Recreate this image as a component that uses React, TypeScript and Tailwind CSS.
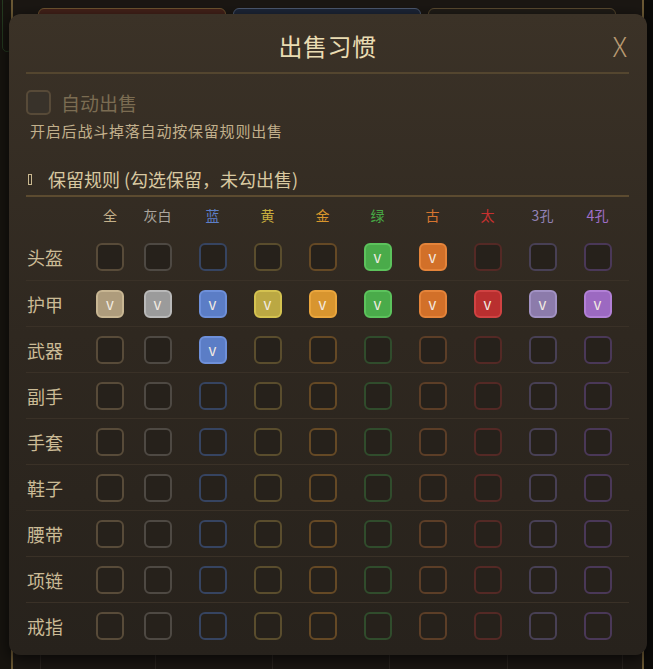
import React from "react";

type Col = { name: string; text: string; off: string; on: string };

const cols: Col[] = [
  { name: "全", text: "text-[#c4b08a]", off: "border-[#584b39]", on: "bg-[#ae9c7c] border-[#c8b692]" },
  { name: "灰白", text: "text-[#aba69e]", off: "border-[#4e4943]", on: "bg-[#9b9b9b] border-[#b9b9b9]" },
  { name: "蓝", text: "text-[#5d7fc9]", off: "border-[#364461]", on: "bg-[#5b7dc6] border-[#6e90da]" },
  { name: "黄", text: "text-[#c8ae3e]", off: "border-[#5a4d2d]", on: "bg-[#bba843] border-[#d4c250]" },
  { name: "金", text: "text-[#d9962c]", off: "border-[#654925]", on: "bg-[#d8952f] border-[#eaa63d]" },
  { name: "绿", text: "text-[#47a845]", off: "border-[#304c2c]", on: "bg-[#4aab4a] border-[#5cc35c]" },
  { name: "古", text: "text-[#d67530]", off: "border-[#5c3e27]", on: "bg-[#d27029] border-[#e5843a]" },
  { name: "太", text: "text-[#c7302f]", off: "border-[#542925]", on: "bg-[#b92f2f] border-[#d04242]" },
  { name: "3孔", text: "text-[#9282b6]", off: "border-[#484055]", on: "bg-[#8c7bab] border-[#a292c4]" },
  { name: "4孔", text: "text-[#a06fcb]", off: "border-[#4a3858]", on: "bg-[#9c69c1] border-[#b280d6]" },
];

const rows: { name: string; checked: number[] }[] = [
  { name: "头盔", checked: [5, 6] },
  { name: "护甲", checked: [0, 1, 2, 3, 4, 5, 6, 7, 8, 9] },
  { name: "武器", checked: [2] },
  { name: "副手", checked: [] },
  { name: "手套", checked: [] },
  { name: "鞋子", checked: [] },
  { name: "腰带", checked: [] },
  { name: "项链", checked: [] },
  { name: "戒指", checked: [] },
];

const gridCols = "grid grid-cols-[64px_40px_repeat(9,55px)]";

function Box({ col, on }: { col: Col; on: boolean }) {
  if (on) {
    return (
      <div
        className={`w-[28px] h-[28px] rounded-[6px] border-2 flex items-center justify-center text-[15px] leading-none text-[#f3ece2] pb-[1px] ${col.on}`}
      >
        v
      </div>
    );
  }
  return <div className={`w-[28px] h-[28px] rounded-[6px] border-2 bg-[#26211b] ${col.off}`} />;
}

export default function App() {
  return (
    <div className="relative w-[653px] h-[669px] overflow-hidden bg-[#0c0b09] font-['Noto_Sans_CJK_SC','Noto_Sans',sans-serif]">
      {/* background page */}
      <div className="absolute left-0 top-0 w-[12px] h-full bg-[#17140f]" />
      <div className="absolute left-[2px] top-[-20px] w-[10px] h-[72px] rounded-[8px] border border-[#243a20]" />
      <div className="absolute left-[11px] top-0 w-[633px] h-full border-x-2 border-[#6a5834] bg-[#1b1713]">
        <div className="flex gap-[7px] pl-[25px] pt-[8px]">
          <div className="w-[188px] h-[40px] rounded-[6px] border border-[#6f5530] bg-[#45221a]" />
          <div className="w-[188px] h-[40px] rounded-[6px] border border-[#4e5a70] bg-[#1d2638]" />
          <div className="w-[188px] h-[40px] rounded-[6px] border border-[#5a4a30] bg-[#201c17]" />
        </div>
        <div className="absolute left-0 bottom-0 w-full h-[14px] flex">
          <div className="w-[28px] border-r border-[#2a2520]" />
          <div className="w-[115px] border-r border-[#2a2520]" />
          <div className="w-[117px] border-r border-[#2a2520]" />
          <div className="w-[117px] border-r border-[#2a2520]" />
          <div className="w-[118px] border-r border-[#2a2520]" />
          <div className="w-[115px] border-r border-[#2a2520]" />
        </div>
      </div>

      {/* modal */}
      <div className="absolute left-[9px] top-[14px] w-[638px] h-[641px] rounded-[12px] bg-gradient-to-b from-[#3b3227] via-[#2f2820] to-[#27221c] shadow-[0_4px_16px_rgba(0,0,0,0.7)] pl-[17px] pr-[18px] flex flex-col">
        {/* header */}
        <div className="grid grid-cols-[1fr_auto_1fr] items-center pt-[18px] pb-[12px]">
          <div />
          <div className="text-[24px] leading-[28px] text-[#eadcb2] tracking-[0.5px]">出售习惯</div>
          <div className="justify-self-end pr-[2px] text-[27px] leading-[28px] font-light text-[#b89a72]">X</div>
        </div>
        <div className="h-[2px] bg-[#54462f]" />

        {/* auto sell */}
        <div className="flex items-center mt-[16px]">
          <div className="w-[25px] h-[25px] rounded-[5px] border-2 border-[#574a38] bg-[#38322a]" />
          <span className="ml-[10px] text-[19px] leading-[25px] text-[#7b6c52]">自动出售</span>
        </div>
        <div className="mt-[6px] pl-[4px] text-[15px] leading-[20px] tracking-[0.8px] text-[#c2b08c]">
          开启后战斗掉落自动按保留规则出售
        </div>

        {/* section heading */}
        <div className="mt-[26px] flex items-center h-[24px] pl-[2px]">
          <span className="w-[4px] h-[11px] border border-[#c9b88f]" />
          <span className="ml-[16px] text-[18px] leading-[24px] text-[#d8c8a0]">保留规则 (勾选保留，未勾出售)</span>
        </div>
        <div className="mt-[4px] h-[2px] bg-[#5c4b30]" />

        {/* column headers */}
        <div className={`${gridCols} mt-[8px] h-[20px] items-center`}>
          <div />
          {cols.map((c) => (
            <div key={c.name} className={`text-center text-[14px] leading-[20px] ${c.text}`}>
              {c.name}
            </div>
          ))}
        </div>

        {/* rows */}
        <div className="mt-[9px] flex flex-col">
          {rows.map((r, ri) => (
            <div
              key={r.name}
              className={`${gridCols} h-[46px] items-center ${ri > 0 ? "border-t border-[#3a3127]" : ""}`}
            >
              <div className="pl-[1px] text-[18px] leading-[24px] text-[#cbbb96]">{r.name}</div>
              {cols.map((c, ci) => (
                <div key={c.name} className="flex justify-center">
                  <Box col={c} on={r.checked.includes(ci)} />
                </div>
              ))}
            </div>
          ))}
        </div>
      </div>
    </div>
  );
}
